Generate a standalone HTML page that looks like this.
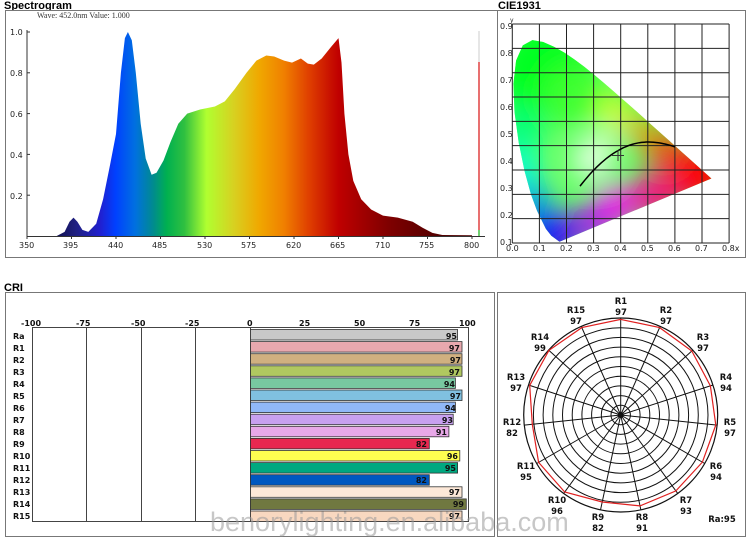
<!DOCTYPE html>
<html><head><meta charset="utf-8"><style>
html,body{margin:0;padding:0;background:#fff;}
svg{display:block;font-family:"DejaVu Sans","Liberation Sans",sans-serif;}
.t{font-family:"Liberation Sans",sans-serif;font-weight:bold;font-size:11px;}
.ax{font-size:8px;fill:#222;}
.cl{font-size:8px;font-weight:bold;fill:#111;}
.pl{font-size:8.5px;font-weight:bold;fill:#111;text-anchor:middle;}
</style></head><body>
<svg id="s" width="750" height="543" viewBox="0 0 750 543" xmlns="http://www.w3.org/2000/svg">
<defs>
<linearGradient id="spg" x1="56" x2="442" y1="0" y2="0" gradientUnits="userSpaceOnUse">
<stop offset="0" stop-color="#101050"/>
<stop offset="0.05" stop-color="#202080"/>
<stop offset="0.115" stop-color="#2020d0"/>
<stop offset="0.154" stop-color="#0040ff"/>
<stop offset="0.205" stop-color="#0070e0"/>
<stop offset="0.251" stop-color="#008a90"/>
<stop offset="0.287" stop-color="#00b050"/>
<stop offset="0.333" stop-color="#30c040"/>
<stop offset="0.39" stop-color="#b0ff30"/>
<stop offset="0.462" stop-color="#d8d020"/>
<stop offset="0.526" stop-color="#f0a800"/>
<stop offset="0.59" stop-color="#f08000"/>
<stop offset="0.654" stop-color="#e04000"/>
<stop offset="0.731" stop-color="#c00000"/>
<stop offset="0.859" stop-color="#800000"/>
<stop offset="1" stop-color="#500000"/>
</linearGradient>
<clipPath id="gam"><path id="gampath" d=""/></clipPath>
<filter id="bl" x="-50%" y="-50%" width="200%" height="200%"><feGaussianBlur stdDeviation="14"/></filter>
</defs>
<text x="4" y="9" class="t">Spectrogram</text>
<rect x="5.5" y="10.5" width="492" height="247" fill="#fff" stroke="#777"/>
<text x="37" y="18" style="font-family:'Liberation Serif',serif;font-size:8px;fill:#333">Wave: 452.0nm Value: 1.000</text>
<g id="specaxes"></g>
<path id="spec" d="" fill="url(#spg)"/>
<line x1="479" y1="31" x2="479" y2="62" stroke="#ddd" stroke-width="1.5"/>
<line x1="479" y1="62" x2="479" y2="230" stroke="#e04040" stroke-width="1.5"/>
<line x1="479" y1="230" x2="479" y2="236" stroke="#40c040" stroke-width="1.5"/>
<g class="ax">
<text x="10" y="35">1.0</text><text x="10" y="76">0.8</text><text x="10" y="117">0.6</text><text x="10" y="158">0.4</text><text x="10" y="199">0.2</text>
<text x="19" y="248">350</text><text x="63" y="248">395</text><text x="108" y="248">440</text><text x="152" y="248">485</text><text x="197" y="248">530</text><text x="241" y="248">575</text><text x="286" y="248">620</text><text x="330" y="248">665</text><text x="375" y="248">710</text><text x="419" y="248">755</text><text x="464" y="248">800</text>
</g>
<text x="498" y="9" class="t">CIE1931</text>
<rect x="497.5" y="10.5" width="248" height="247" fill="#fff" stroke="#777"/>
<g clip-path="url(#gam)">
<rect x="505" y="20" width="235" height="230" fill="#60ff60"/>
<g filter="url(#bl)">
<circle cx="545" cy="70" r="50" fill="#00ff20"/>
<circle cx="575" cy="95" r="30" fill="#40ff30"/>
<circle cx="520" cy="130" r="22" fill="#00ff80"/>
<circle cx="518" cy="170" r="20" fill="#00ffe0"/>
<circle cx="530" cy="200" r="18" fill="#0090ff"/>
<circle cx="550" cy="235" r="25" fill="#0000ff"/>
<circle cx="590" cy="225" r="18" fill="#a000ff"/>
<circle cx="615" cy="205" r="20" fill="#ff00ff"/>
<circle cx="655" cy="195" r="22" fill="#ff0080"/>
<circle cx="700" cy="175" r="30" fill="#ff0000"/>
<circle cx="665" cy="150" r="18" fill="#ff3000"/>
<circle cx="640" cy="130" r="14" fill="#ff9000"/>
<circle cx="615" cy="112" r="14" fill="#ffff00"/>
<circle cx="592" cy="160" r="18" fill="#ffffff"/>
<circle cx="605" cy="140" r="10" fill="#ffffe0"/>
</g>
</g>
<g id="ciegrid"></g>
<path id="planck" d="" fill="none" stroke="#000" stroke-width="1.5"/>
<path d="M612 155.5h12M618 150v11" stroke="#333" stroke-width="1"/>
<g class="ax">
<text x="500" y="29">0.9</text><text x="500" y="56">0.8</text><text x="500" y="83">0.7</text><text x="500" y="110">0.6</text><text x="500" y="137">0.5</text><text x="500" y="164">0.4</text><text x="500" y="191">0.3</text><text x="500" y="218">0.2</text><text x="500" y="245">0.1</text>
<text x="510" y="22" style="font-size:6px">y</text>
<text x="506" y="251">0.0</text><text x="533" y="251">0.1</text><text x="560" y="251">0.2</text><text x="587" y="251">0.3</text><text x="614" y="251">0.4</text><text x="641" y="251">0.5</text><text x="668" y="251">0.6</text><text x="695" y="251">0.7</text><text x="722" y="251">0.8x</text>
</g>
<text x="4" y="291" class="t">CRI</text>
<rect x="5.5" y="292.5" width="489" height="244" fill="#fff" stroke="#777"/>
<g class="cl">
<text x="21" y="326">-100</text><text x="76" y="326">-75</text><text x="131" y="326">-50</text><text x="185" y="326">-25</text><text x="247" y="326">0</text><text x="299" y="326">25</text><text x="354" y="326">50</text><text x="409" y="326">75</text><text x="459" y="326">100</text>
</g>
<g id="crigrid"></g>
<g id="bars"></g>
<g class="cl">
<text x="13" y="339">Ra</text><text x="13" y="351">R1</text><text x="13" y="363">R2</text><text x="13" y="375">R3</text><text x="13" y="387">R4</text><text x="13" y="399">R5</text><text x="13" y="411">R6</text><text x="13" y="423">R7</text><text x="13" y="435">R8</text><text x="13" y="447">R9</text><text x="13" y="459">R10</text><text x="13" y="471">R11</text><text x="13" y="483">R12</text><text x="13" y="495">R13</text><text x="13" y="507">R14</text><text x="13" y="519">R15</text>
</g>
<g class="cl" text-anchor="end">
<text x="457" y="339">95</text><text x="460" y="351">97</text><text x="461" y="363">97</text><text x="460" y="375">97</text><text x="455" y="387">94</text><text x="461" y="399">97</text><text x="456" y="411">94</text><text x="453" y="423">93</text><text x="447" y="435">91</text><text x="427" y="447">82</text><text x="458" y="459">96</text><text x="456" y="471">95</text><text x="427" y="483">82</text><text x="460" y="495">97</text><text x="464" y="507">99</text><text x="460" y="519">97</text>
</g>
<rect x="497.5" y="292.5" width="248" height="244" fill="#fff" stroke="#777"/>
<g id="polar"></g>
<g class="pl">
<text x="621" y="304">R1</text><text x="621" y="315">97</text>
<text x="666" y="313">R2</text><text x="666" y="324">97</text>
<text x="703" y="340">R3</text><text x="703" y="351">97</text>
<text x="726" y="380">R4</text><text x="726" y="391">94</text>
<text x="730" y="425">R5</text><text x="730" y="436">97</text>
<text x="716" y="469">R6</text><text x="716" y="480">94</text>
<text x="686" y="503">R7</text><text x="686" y="514">93</text>
<text x="642" y="520">R8</text><text x="642" y="531">91</text>
<text x="598" y="520">R9</text><text x="598" y="531">82</text>
<text x="557" y="503">R10</text><text x="557" y="514">96</text>
<text x="526" y="469">R11</text><text x="526" y="480">95</text>
<text x="512" y="425">R12</text><text x="512" y="436">82</text>
<text x="516" y="380">R13</text><text x="516" y="391">97</text>
<text x="540" y="340">R14</text><text x="540" y="351">99</text>
<text x="576" y="313">R15</text><text x="576" y="324">97</text>
<text x="722" y="522">Ra:95</text>
</g>
<text x="210" y="531" style="font-family:'Liberation Sans',sans-serif;font-size:27px;fill:#999;fill-opacity:0.55">benorylighting.en.alibaba.com</text>
</svg>
<script>
(function(){
var NS="http://www.w3.org/2000/svg";
function el(p,t,a){var e=document.createElementNS(NS,t);for(var k in a)e.setAttribute(k,a[k]);p.appendChild(e);return e;}
function sx(nm){return 27+(nm-350)*445/450;}function sy(v){return 236-v*204;}
var pts=[[380,0],[388,0.02],[393,0.07],[397,0.09],[401,0.07],[406,0.03],[412,0.02],[420,0.06],[427,0.18],[434,0.35],[440,0.5],[445,0.8],[449,0.97],[452,1.0],[456,0.96],[460,0.8],[465,0.55],[470,0.38],[476,0.3],[481,0.31],[488,0.37],[495,0.46],[503,0.55],[512,0.6],[525,0.62],[540,0.635],[550,0.66],[560,0.72],[572,0.8],[582,0.86],[592,0.885],[600,0.88],[610,0.86],[618,0.85],[627,0.87],[634,0.845],[640,0.84],[648,0.87],[658,0.93],[665,0.97],[668,0.85],[671,0.6],[675,0.4],[680,0.27],[688,0.18],[698,0.13],[710,0.1],[725,0.09],[740,0.07],[750,0.04],[760,0.015],[770,0.005],[800,0.004],[800,0]];
var d='M'+sx(380)+' '+sy(0);pts.forEach(function(p){d+=' L'+sx(p[0]).toFixed(1)+' '+sy(p[1]).toFixed(1);});d+='Z';
document.getElementById('spec').setAttribute('d',d);
var sa=document.getElementById('specaxes');
el(sa,'line',{x1:27,y1:30,x2:27,y2:236.5,stroke:'#333'});
el(sa,'line',{x1:27,y1:236.5,x2:485,y2:236.5,stroke:'#333'});
for(var i=0;i<=10;i++){var x=27+i*44.5;el(sa,'line',{x1:x,y1:236,x2:x,y2:239,stroke:'#333'});}
for(var i=1;i<=5;i++){var y=236-i*40.8;el(sa,'line',{x1:27,y1:y,x2:30,y2:y,stroke:'#333'});}
function cx(x){return 512.3+x*271;}function cy(y){return 243-y*243.3;}
var loc=[[0.1741,0.005],[0.144,0.0297],[0.1241,0.0578],[0.0913,0.1327],[0.0687,0.2007],[0.0454,0.295],[0.0235,0.4127],[0.0082,0.5384],[0.0039,0.6548],[0.0139,0.7502],[0.0389,0.812],[0.0743,0.8338],[0.1142,0.8262],[0.1547,0.8059],[0.1929,0.7816],[0.2296,0.7543],[0.2658,0.7243],[0.3016,0.6923],[0.3373,0.6589],[0.3731,0.6245],[0.4087,0.5896],[0.4441,0.5547],[0.4788,0.5202],[0.5125,0.4866],[0.5448,0.4544],[0.5752,0.4242],[0.6029,0.3965],[0.627,0.3725],[0.6482,0.3514],[0.6658,0.334],[0.6801,0.3197],[0.7347,0.2653]];
var gd='';loc.forEach(function(p,i){gd+=(i?'L':'M')+cx(p[0]).toFixed(1)+' '+cy(p[1]).toFixed(1);});gd+='Z';
document.getElementById('gampath').setAttribute('d',gd);
var cg=document.getElementById('ciegrid');
for(var i=0;i<=8;i++){el(cg,'line',{x1:cx(i/10),y1:cy(0.9),x2:cx(i/10),y2:cy(0),stroke:'#222','stroke-width':1});}
for(var i=0;i<=9;i++){el(cg,'line',{x1:cx(0),y1:cy(i/10),x2:cx(0.8),y2:cy(i/10),stroke:'#222','stroke-width':1});}
var pl='';for(var t=0;t<=40;t++){var x=0.25+t*(0.35/40);var y=0.415-2.0*Math.pow(x-0.5,2)*((x<0.5)?1.45:1.0);pl+=(t?'L':'M')+cx(x).toFixed(1)+' '+cy(y).toFixed(1);}
document.getElementById('planck').setAttribute('d',pl);
var cr=document.getElementById('crigrid');
el(cr,'rect',{x:32.5,y:327.5,width:436,height:194,fill:'none',stroke:'#444'});
[86.5,141.5,195.5,250.5].forEach(function(x){el(cr,'line',{x1:x,y1:327,x2:x,y2:522,stroke:'#444'});});
var cols=['#c8c8c8','#e8a8ae','#d0b080','#b0c860','#78c8a0','#80c0e0','#90b8f8','#c8a0f0','#e8a8e8','#e82850','#ffff50','#00a880','#0058c0','#fde8d8','#707840','#f8d8c0'];
var vals=[95,97,97,97,94,97,94,93,91,82,96,95,82,97,99,97];
var bg=document.getElementById('bars');
for(var i=0;i<16;i++){var y=329.5+i*12.1;el(bg,'rect',{x:250.5,y:y,width:(vals[i]*2.18).toFixed(1),height:10.5,fill:cols[i],stroke:'#333','stroke-width':0.8});}
var p=document.getElementById('polar');var X=620.7,Y=415,R=97;
for(var i=1;i<=10;i++){el(p,'circle',{cx:X,cy:Y,r:R*i/10,fill:'none',stroke:'#111','stroke-width':i==10?1.2:1});}
for(var k=0;k<15;k++){var a=k*24*Math.PI/180;el(p,'line',{x1:X,y1:Y,x2:X+R*Math.sin(a),y2:Y-R*Math.cos(a),stroke:'#111'});}
el(p,'circle',{cx:X,cy:Y,r:3,fill:'#111'});
var pv=[97,97,97,94,97,94,93,91,82,96,95,82,97,99,97];var pp='';
for(var k=0;k<15;k++){var a=k*24*Math.PI/180;var r=97-(100-pv[k])*0.45;pp+=(X+r*Math.sin(a)).toFixed(1)+','+(Y-r*Math.cos(a)).toFixed(1)+' ';}
el(p,'polygon',{points:pp,fill:'none',stroke:'#e02020','stroke-width':1.2});
})();
</script>
</body></html>
